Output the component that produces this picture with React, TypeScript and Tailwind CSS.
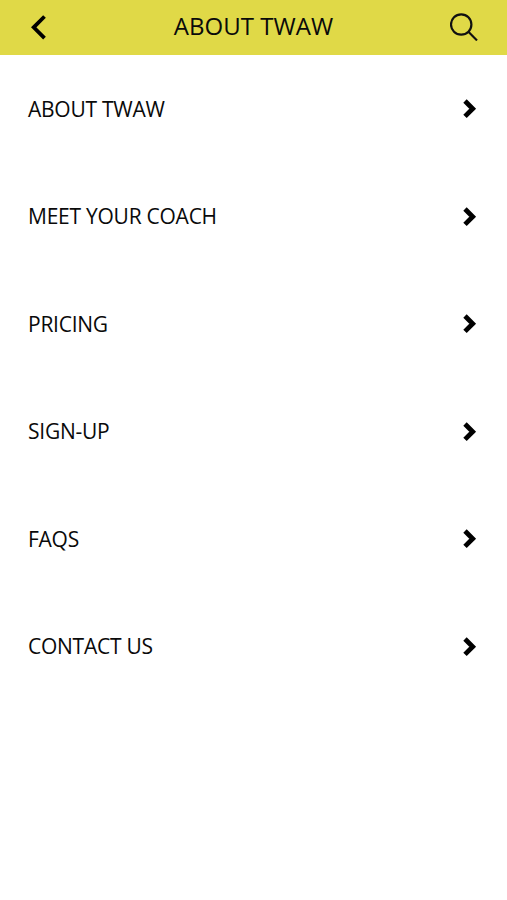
import { useState } from "react";

const items = ["ABOUT TWAW", "MEET YOUR COACH", "PRICING", "SIGN-UP", "FAQS", "CONTACT US"];

function Chevron() {
  return (
    <svg width="14" height="20" viewBox="0 0 14 20" fill="none" stroke="#000" strokeWidth="4.8">
      <path d="M2 2l7.7 7.7L2 17.4" />
    </svg>
  );
}

export default function App() {
  const [active, setActive] = useState("");

  return (
    <div className="min-h-screen w-full bg-white font-['Open_Sans',sans-serif] text-[#0a0a0a]">
      <header className="flex h-[54.5px] items-center justify-between bg-[#e0d947] pr-[29px] pl-[29px]">
        <button aria-label="Back" className="w-7">
          <svg width="18" height="26" viewBox="0 0 18 26" fill="none" stroke="#000" strokeWidth="3.8">
            <path d="M15.5 2.5L4.7 13.3l10.8 10.8" />
          </svg>
        </button>
        <h1 className="pb-[3px] text-[24px] leading-none tracking-[0.05px]">ABOUT TWAW</h1>
        <button aria-label="Search">
          <svg width="28" height="28" viewBox="0 0 28 28" fill="none" stroke="#111" strokeWidth="2.2">
            <circle cx="11.2" cy="11.5" r="10.2" />
            <path d="M18.4 18.7l8.6 8.7" />
          </svg>
        </button>
      </header>
      <nav className="flex flex-col pt-px">
        {items.map((item) => (
          <button
            key={item}
            onClick={() => setActive(item)}
            aria-pressed={active === item}
            className="flex h-[107.5px] items-center justify-between pr-[30px] pl-7 text-[21px] leading-none tracking-[-0.25px]"
          >
            <span>{item}</span>
            <Chevron />
          </button>
        ))}
      </nav>
    </div>
  );
}
